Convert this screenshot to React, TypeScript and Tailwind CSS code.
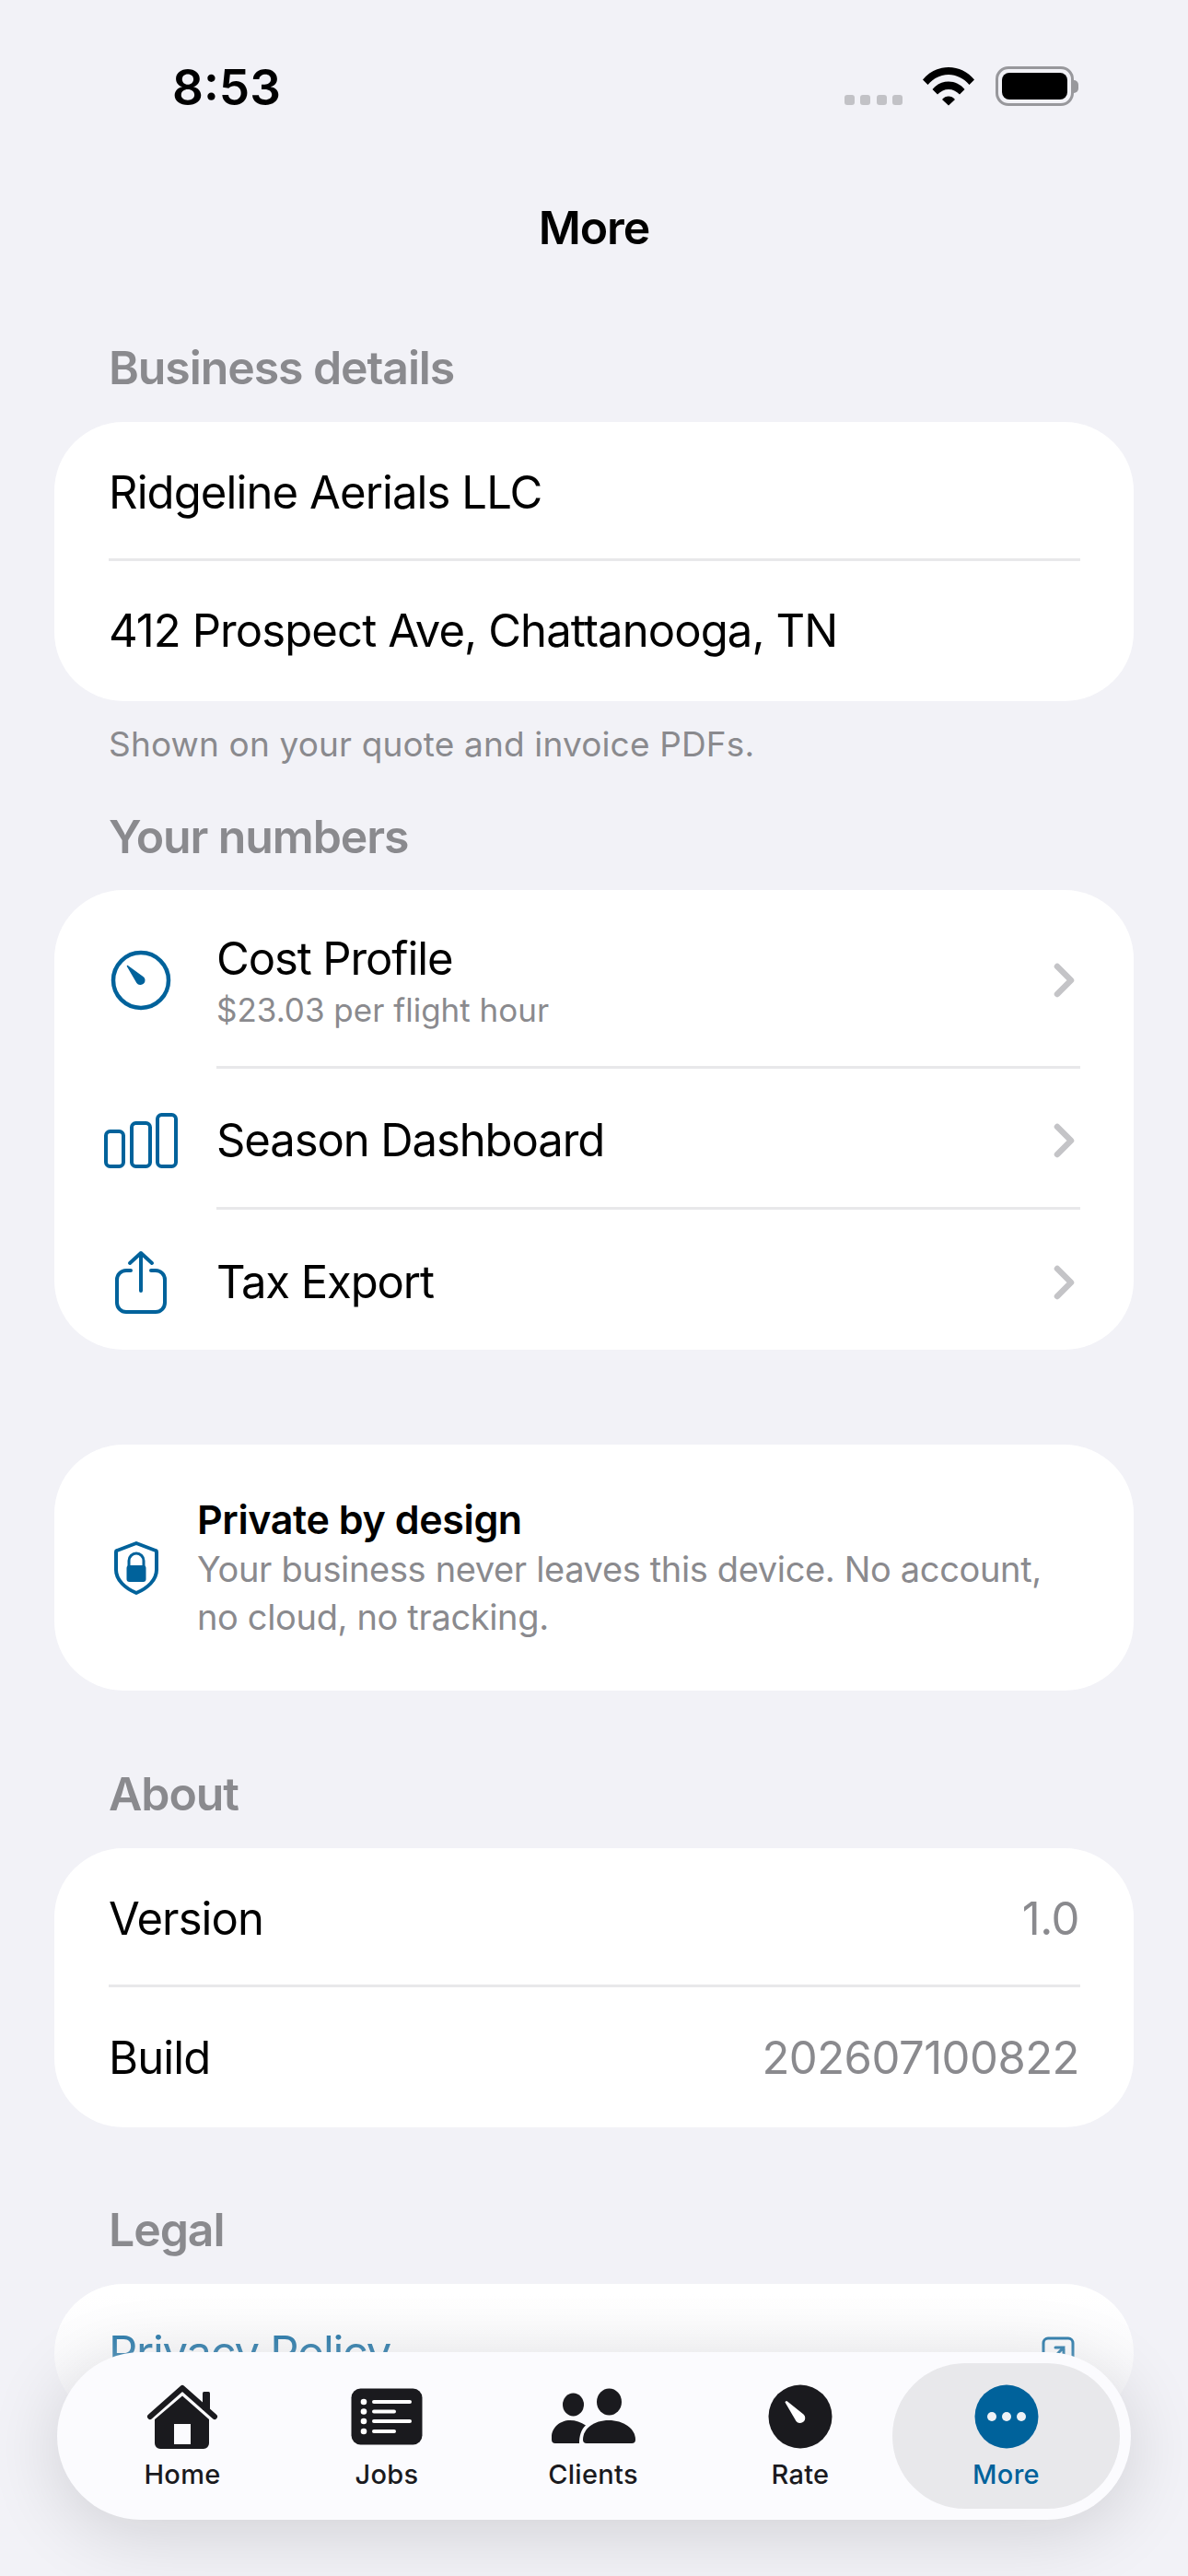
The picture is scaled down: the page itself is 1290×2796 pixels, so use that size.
const BLUE = '#00629b'
const INK = '#1a1a1e'

const Chevron = () => (
    <svg width="24" height="38" viewBox="0 0 24 38" fill="none" className="shrink-0">
        <path d="M4 4L19 19L4 34" stroke="#c4c4c7" strokeWidth="6.5" strokeLinecap="round" strokeLinejoin="round"/>
    </svg>
)

const GaugeIcon = () => (
    <svg width="66" height="66" viewBox="0 0 66 66" fill="none">
        <circle cx="33" cy="33" r="30" stroke={BLUE} strokeWidth="4.5"/>
        <path d="M18.500 17.500L35 29.500a4.300 4.300 0 1 1-6 6Z" fill={BLUE} stroke={BLUE} strokeWidth="1.500" strokeLinejoin="round"/>
    </svg>
)

const BarsIcon = () => (
    <svg width="80" height="60" viewBox="0 0 80 60" fill="none" stroke={BLUE} strokeWidth="4">
        <rect x="2" y="20" width="19" height="38" rx="4.500"/>
        <rect x="30" y="11" width="20" height="47" rx="4.500"/>
        <rect x="58" y="2" width="20" height="56" rx="4.500"/>
    </svg>
)

const ShareIcon = () => (
    <svg width="58" height="70" viewBox="0 0 58 70" fill="none" stroke={BLUE} strokeWidth="4" strokeLinecap="round" strokeLinejoin="round">
        <path d="M18 22H13a10 10 0 0 0-10 10v25a10 10 0 0 0 10 10h32a10 10 0 0 0 10-10V32a10 10 0 0 0-10-10h-5"/>
        <path d="M29 44V3M17 14L29 3L41 14"/>
    </svg>
)

const ShieldIcon = () => (
    <svg width="50" height="60" viewBox="0 0 50 60" fill="none" className="shrink-0">
        <path d="M25 3L46 11a1.500 1.500 0 0 1 1 1.500V32c0 11-10 20-22 25C13 52 3 43 3 32V12.500a1.500 1.500 0 0 1 1-1.500Z" stroke={BLUE} strokeWidth="4" strokeLinejoin="round"/>
        <path d="M17 28v-6a8 8 0 0 1 16 0v6" stroke={BLUE} strokeWidth="3"/>
        <rect x="14.500" y="27" width="21" height="18" rx="3" fill={BLUE}/>
    </svg>
)

const HomeIcon = () => (
    <svg width="80" height="72" viewBox="0 0 80 72" fill={INK}>
        <path d="M5 36L40 5L75 36" fill="none" stroke={INK} strokeWidth="6" strokeLinecap="round" strokeLinejoin="round"/>
        <rect x="62" y="9" width="8" height="20" rx="1.500"/>
        <path fillRule="evenodd" d="M40 13.500L69 39V65a6 6 0 0 1-6 6H16a6 6 0 0 1-6-6V39ZM31 44v22h18V44Z"/>
    </svg>
)

const JobsIcon = () => (
    <svg width="78" height="62" viewBox="0 0 78 62">
        <rect x="0.500" y="0.500" width="77" height="61" rx="10" fill={INK}/>
        <g fill="#fff">
            <circle cx="14" cy="15" r="3.300"/>
            <circle cx="14" cy="25.500" r="3.300"/>
            <circle cx="14" cy="36" r="3.300"/>
            <circle cx="14" cy="47" r="3.300"/>
            <rect x="23" y="13" width="43" height="4" rx="2"/>
            <rect x="23" y="23.500" width="26" height="4" rx="2"/>
            <rect x="23" y="34" width="43" height="4" rx="2"/>
            <rect x="23" y="45" width="26" height="4" rx="2"/>
        </g>
    </svg>
)

const ClientsIcon = () => (
    <svg width="92" height="62" viewBox="0 0 92 62" fill={INK}>
        <ellipse cx="24.500" cy="18" rx="11.500" ry="12.500"/>
        <ellipse cx="63.500" cy="15" rx="13.500" ry="14.500"/>
        <path d="M1 53C1 43 10 35 21 35C27 35 33 37 38 40.500C33 45 31 52 31 60H5A4 4 0 0 1 1 56Z"/>
        <path d="M35 56C35 44 47 35 63 35C79 35 92 44 92 56A4 4 0 0 1 88 60H39A4 4 0 0 1 35 56Z"/>
    </svg>
)

const RateIcon = () => (
    <svg width="70" height="70" viewBox="0 0 70 70">
        <circle cx="35" cy="35" r="34.500" fill={INK}/>
        <path d="M18.500 19.500a1.500 1.500 0 0 1 2.500-1L38.500 32.500a5.500 5.500 0 1 1-8 7.500Z" fill="#fff"/>
    </svg>
)

const MoreIcon = () => (
    <svg width="70" height="70" viewBox="0 0 70 70">
        <circle cx="35" cy="35" r="34.500" fill={BLUE}/>
        <g fill="#eef2f6">
            <circle cx="19" cy="35" r="5"/>
            <circle cx="35" cy="35" r="5"/>
            <circle cx="51" cy="35" r="5"/>
        </g>
    </svg>
)

const Label = ({children, className = ''}: {children: string; className?: string}) => (
    <div className={`pl-[118px] text-[50px] leading-[60px] font-semibold tracking-[-1.1px] text-[#8a8a8e] ${className}`}>{children}</div>
)

const Divider = ({inset = 'ml-[59px]'}: {inset?: string}) => (
    <div className={`h-[3px] mr-[58px] bg-[#e8e8ea] ${inset}`}/>
)

const PlainRow = ({left, right, height}: {left: string; right?: string; height: string}) => (
    <div className={`flex items-center justify-between px-[59px] text-[49px] tracking-[-0.9px] text-black ${height}`}>
        <span>{left}</span>
        {right && <span className="tracking-[-0.5px] text-[#8a8a8e]">{right}</span>}
    </div>
)

const NavRow = ({icon, title, sub, height}: {icon: React.ReactNode; title: string; sub?: string; height: string}) => (
    <div className={`flex items-center pt-[5px] pl-[35px] pr-[63px] ${height}`}>
        <div className="w-[118px] flex justify-center shrink-0">{icon}</div>
        <div className="ml-[23px] flex-1">
            <div className="text-[49px] leading-[60px] tracking-[-1.1px] text-black">{title}</div>
            {sub && <div className="mt-[3px] text-[35px] leading-[44px] text-[#8a8a8e]">{sub}</div>}
        </div>
        <Chevron/>
    </div>
)

const Tab = ({icon, label, width, active}: {icon: React.ReactNode; label: string; width: string; active?: boolean}) => (
    <div className={`flex flex-col items-center h-[158px] ${width} ${active ? 'bg-[#e8e8eb] rounded-[79px]' : ''}`}>
        <div className="h-[80px] mt-[18px] flex items-center justify-center">{icon}</div>
        <div className={`mt-[5px] text-[29px] leading-[36px] font-medium tracking-[0.3px] ${active ? 'text-[#00629b]' : 'text-[#1a1a1e]'}`}>{label}</div>
    </div>
)

export default function App() {
    return (
        <div className="relative w-[1290px] h-[2796px] overflow-hidden bg-[#f2f2f7] font-['Inter',sans-serif]">
            {/* status bar */}
            <div className="h-[190px] flex items-start justify-between pl-[187px] pr-[119px]">
                <div className="mt-[62px] text-[53px] leading-[66px] font-semibold text-black">8:53</div>
                <div className="mt-[72px] flex items-start">
                    <div className="mt-[31px] flex gap-[6.5px]">
                        <div className="w-[11px] h-[11px] rounded-[3px] bg-[#c2c2c6]"/>
                        <div className="w-[11px] h-[11px] rounded-[3px] bg-[#c2c2c6]"/>
                        <div className="w-[11px] h-[11px] rounded-[3px] bg-[#c2c2c6]"/>
                        <div className="w-[11px] h-[11px] rounded-[3px] bg-[#c2c2c6]"/>
                    </div>
                    <svg width="58" height="43" viewBox="0 0 58 43" className="ml-[21px]">
                        <path d="M1 14.500C8 6 18 1 29 1s21 5 28 13.500l-5.500 5.500C45.500 13 37.500 9 29 9S12.500 13 6.500 20Z"/>
                        <path d="M11.500 25C16 19.500 22 16.500 29 16.500S42 19.500 46.500 25L41 30.500C37.500 27 33.500 25 29 25S20.500 27 17 30.500Z"/>
                        <path d="M22 36C24 33.500 26.500 32.500 29 32.500S34 33.500 36 36L29 42.500Z"/>
                    </svg>
                    <div className="ml-[22px] flex items-center">
                        <div className="w-[85px] h-[43px] rounded-[14px] border-[3px] border-[#98989c] p-[4px]">
                            <div className="w-full h-full rounded-[8px] bg-black"/>
                        </div>
                        <div className="w-[5px] h-[14px] rounded-r-[5px] bg-[#98989c]"/>
                    </div>
                </div>
            </div>

            <div className="h-[114px] text-center text-[50px] leading-[114px] font-semibold tracking-[-1.1px] text-black">More</div>

            <Label className="mt-[65px]">Business details</Label>
            <div className="mt-[29px] mx-[59px] rounded-[75px] bg-white">
                <PlainRow left="Ridgeline Aerials LLC" height="h-[148px] pt-[6px]"/>
                <Divider/>
                <PlainRow left="412 Prospect Ave, Chattanooga, TN" height="h-[152px]"/>
            </div>
            <div className="mt-[24px] pl-[118px] text-[37px] leading-[46px] tracking-[0.15px] text-[#8a8a8e]">Shown on your quote and invoice PDFs.</div>

            <Label className="mt-[47px]">Your numbers</Label>
            <div className="mt-[28px] mx-[59px] rounded-[75px] bg-white">
                <NavRow icon={<GaugeIcon/>} title="Cost Profile" sub="$23.03 per flight hour" height="h-[191px]"/>
                <Divider inset="ml-[176px]"/>
                <NavRow icon={<BarsIcon/>} title="Season Dashboard" height="h-[150px]"/>
                <Divider inset="ml-[176px]"/>
                <NavRow icon={<ShareIcon/>} title="Tax Export" height="h-[152px]"/>
            </div>

            <div className="mt-[103px] mx-[59px] h-[267px] rounded-[75px] bg-white flex items-center pl-[64px] pr-[60px]">
                <ShieldIcon/>
                <div className="ml-[41px]">
                    <div className="text-[43px] leading-[52px] font-semibold tracking-[-0.4px] text-black">Private by design</div>
                    <div className="mt-[2px] text-[38px] leading-[52px] tracking-[-0.35px] text-[#8a8a8e]">Your business never leaves this device. No account, no cloud, no tracking.</div>
                </div>
            </div>

            <Label className="mt-[82px]">About</Label>
            <div className="mt-[29px] mx-[59px] rounded-[75px] bg-white">
                <PlainRow left="Version" right="1.0" height="h-[148px] pt-[6px]"/>
                <Divider/>
                <PlainRow left="Build" right="202607100822" height="h-[152px] pt-[2px]"/>
            </div>

            <Label className="mt-[81px]">Legal</Label>
            <div className="mt-[29px] mx-[59px] h-[150px] rounded-[75px] bg-white flex items-center justify-between pl-[59px] pr-[64px]">
                <span className="text-[49px] tracking-[-1.3px] text-[#00629b]">Privacy Policy</span>
                <svg width="36" height="36" viewBox="0 0 36 36" fill="none" stroke={BLUE} strokeWidth="3" strokeLinecap="round">
                    <rect x="2" y="2" width="32" height="32" rx="5"/>
                    <path d="M12 24L24 12M15 12h9v9"/>
                </svg>
            </div>

            {/* fade behind the tab bar */}
            <div className="absolute inset-x-0 bottom-0 h-[306px] bg-[linear-gradient(to_bottom,#f2f2f700_0px,#f2f2f74d_60px,#f2f2f7d9_135px,#f2f2f7_210px)]"/>

            <div className="absolute left-[62px] top-[2553px] w-[1166px] h-[182px] rounded-[91px] bg-[#fbfbfe] shadow-[0_14px_80px_rgba(0,0,0,0.14)] flex items-center pl-[25px] pr-[12px]">
                <Tab icon={<HomeIcon/>} label="Home" width="w-[222px]"/>
                <Tab icon={<JobsIcon/>} label="Jobs" width="w-[222px]"/>
                <Tab icon={<ClientsIcon/>} label="Clients" width="w-[226px]"/>
                <Tab icon={<RateIcon/>} label="Rate" width="w-[212px] pl-[12px]"/>
                <Tab icon={<MoreIcon/>} label="More" width="w-[247px]" active/>
            </div>
        </div>
    )
}
